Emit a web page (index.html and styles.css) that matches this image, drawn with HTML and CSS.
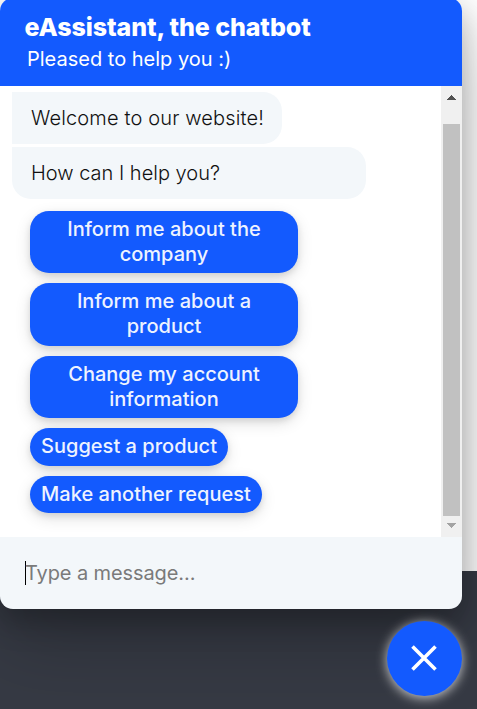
FILE: index.html
```html
<!DOCTYPE html>
<html lang="en">
<head>
<meta charset="utf-8">
<title>eAssistant</title>
<link rel="stylesheet" href="styles.css">
</head>
<body>
<main class="chat">
  <header class="chat-header">
    <h1 class="title">eAssistant, the chatbot</h1>
    <p class="subtitle">Pleased to help you :)</p>
  </header>
  <div class="conversation">
    <div class="messages">
      <p class="bubble first">Welcome to our website!</p>
      <p class="bubble last">How can I help you?</p>
      <div class="replies">
        <button class="reply wide">Inform me about the<br>company</button>
        <button class="reply wide taller">Inform me about a<br>product</button>
        <button class="reply wide">Change my account<br>information</button>
        <button class="reply suggest">Suggest a product</button>
        <button class="reply request">Make another request</button>
      </div>
    </div>
    <div class="scrollbar">
      <svg class="arrow" viewBox="0 0 9 5" width="9" height="5" shape-rendering="crispEdges"><path d="M4 0h1v1h1v1h1v1h1v1h1v1H0V4h1V3h1V2h1V1h1z" fill="#505050"/></svg>
      <div class="thumb"></div>
      <svg class="arrow" viewBox="0 0 9 5" width="9" height="5" shape-rendering="crispEdges"><path d="M0 0h9v1H8v1H7v1H6v1H5v1H4V4H3V3H2V2H1V1H0z" fill="#a3a3a3"/></svg>
    </div>
  </div>
  <div class="composer"><span class="caret"></span><span class="placeholder">Type a message...</span></div>
</main>
<button class="launcher" aria-label="Close">
  <svg viewBox="0 0 26 26" width="26" height="26"><path d="M1.5 1.5l23 23M24.5 1.5l-23 23" stroke="#fff" stroke-width="3.6" fill="none"/></svg>
</button>
</body>
</html>
```
FILE: styles.css
```css
* { box-sizing: border-box; }
body {
  margin: 0;
  height: 709px;
  overflow: hidden;
  display: flex;
  flex-direction: column;
  font-family: Inter, "Liberation Sans", sans-serif;
  font-size: 20px;
  background: linear-gradient(#fff 571px, #363a44 571px);
}
h1, p { margin: 0; }
button { border: 0; font: inherit; }
.chat {
  width: 462px;
  height: 611px;
  margin-top: -2px;
  flex: none;
  display: flex;
  flex-direction: column;
  border-radius: 13px;
  overflow: hidden;
  box-shadow: 0 34px 76px rgba(0, 0, 0, .22), 0 12px 30px rgba(0, 0, 0, .25);
}
.chat-header {
  height: 88px;
  padding: 13px 25px 0 24.5px;
  background: #135afe;
  color: #fff;
}
.title { font-size: 25px; line-height: 32px; font-weight: 800; letter-spacing: -.09px; white-space: nowrap; }
.subtitle { padding: 4px 0 0 2.5px; line-height: 24px; font-weight: 400; }
.conversation { height: 451px; display: flex; background: #fff; }
.messages { flex: 1; padding: 6px 12px 0; }
.bubble {
  height: 52px;
  padding-left: 19px;
  line-height: 52px;
  font-weight: 300;
  color: #111;
  background: #f3f7fa;
  white-space: nowrap;
}
.first { width: 270px; border-radius: 0 19px 19px 0; letter-spacing: .15px; }
.last { width: 354px; margin-top: 3px; border-radius: 0 19px 19px 19px; }
.replies {
  display: flex;
  flex-direction: column;
  align-items: flex-start;
  gap: 10px;
  padding: 12px 0 0 18px;
}
.reply {
  height: 38px;
  padding: 0 0 1px;
  border-radius: 19px;
  line-height: 25px;
  font-weight: 500;
  letter-spacing: .02px;
  color: #eef3ff;
  background: #135afe;
  box-shadow: 0 5px 16px rgba(0, 0, 0, .12), 0 3px 6px rgba(0, 0, 0, .1);
  white-space: nowrap;
}
.wide { width: 268px; height: 62px; }
.taller { height: 63px; }
.suggest { width: 198px; }
.request { width: 232px; height: 37px; }
.scrollbar {
  width: 21px;
  display: flex;
  flex-direction: column;
  align-items: center;
  padding-top: 9px;
  background: #f0f0f0;
}
.thumb { width: 17px; height: 392px; margin: 24px 0 7px; background: #c1c1c1; }
.composer {
  flex: 1;
  display: flex;
  align-items: center;
  padding-left: 25px;
  background: #f3f7fa;
  color: #7a7a7a;
}
.caret { width: 1px; height: 24px; margin-right: -1px; background: #000; }
.placeholder { letter-spacing: -.1px; }
.launcher {
  width: 75px;
  height: 75px;
  flex: none;
  margin: 12px 0 0 387px;
  padding: 0 1px 1px 0;
  display: flex;
  align-items: center;
  justify-content: center;
  border-radius: 50%;
  background: #135afe;
  box-shadow: 0 2px 12px rgba(255, 255, 255, .75);
}
```
